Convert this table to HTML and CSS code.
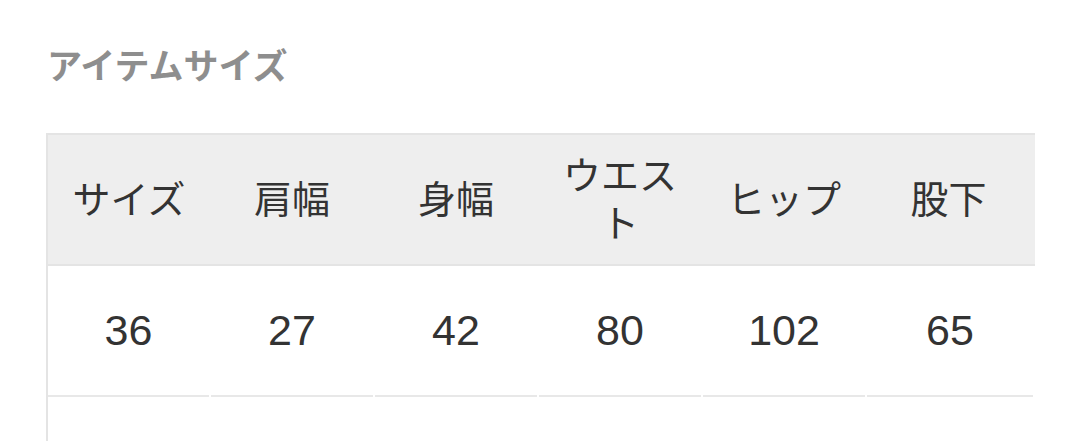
FILE: index.html
```html
<!DOCTYPE html>
<html lang="ja">
<head>
<meta charset="utf-8">
<link rel="stylesheet" href="styles.css">
</head>
<body>
<section class="size-section">
  <h2 class="title">アイテムサイズ</h2>
  <div class="size-table">
    <div class="row head">
      <div class="cell">サイズ</div>
      <div class="cell">肩幅</div>
      <div class="cell">身幅</div>
      <div class="cell">ウエスト</div>
      <div class="cell">ヒップ</div>
      <div class="cell">股下</div>
    </div>
    <div class="row data">
      <div class="cell">36</div>
      <div class="cell">27</div>
      <div class="cell">42</div>
      <div class="cell">80</div>
      <div class="cell">102</div>
      <div class="cell">65</div>
    </div>
    <div class="row data">
      <div class="cell"></div>
      <div class="cell"></div>
      <div class="cell"></div>
      <div class="cell"></div>
      <div class="cell"></div>
      <div class="cell"></div>
    </div>
  </div>
</section>
</body>
</html>
```

FILE: styles.css
```css
html, body {
  margin: 0;
  padding: 0;
  background: #ffffff;
  overflow: hidden;
  height: 441px;
}
body {
  font-family: "Liberation Sans", "Noto Sans CJK JP", sans-serif;
  color: #333333;
}
.size-section {
  padding: 47px 47px 0 46px;
}
.title {
  margin: 0 0 0 1px;
  font-size: 35px;
  line-height: 40px;
  font-weight: 700;
  color: #8e8e8e;
  letter-spacing: 0;
}
.size-table {
  margin-top: 46px;
  width: 987px;
  border-left: 2px solid #e4e4e4;
}
.row {
  display: grid;
  grid-template-columns: 162px 164px 164px 164px 164px 165px;
  column-gap: 0;
}
.head {
  background: #eeeeee;
  border-top: 2px solid #e4e4e4;
  border-bottom: 2px solid #e4e4e4;
  height: 129px;
}
.head .cell {
  display: flex;
  align-items: center;
  justify-content: center;
  text-align: center;
  padding: 0 14px;
  font-size: 38px;
  line-height: 48px;
}
.data {
  column-gap: 2px;
  grid-template-columns: 161px 162px 162px 162px 162px 166px;
}
.data .cell {
  height: 129px;
  border-bottom: 2px solid #e8e8e8;
  display: flex;
  align-items: center;
  justify-content: center;
  font-size: 43px;
}
```
